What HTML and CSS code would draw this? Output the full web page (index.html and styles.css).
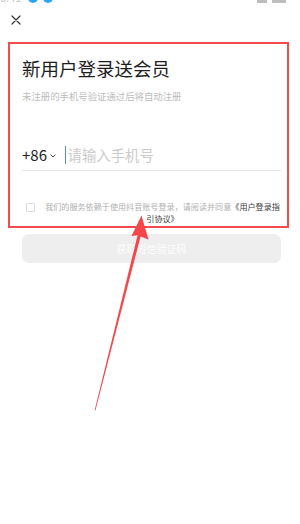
FILE: index.html
```html
<!DOCTYPE html>
<html lang="zh-CN">
<head>
<meta charset="utf-8">
<link rel="stylesheet" href="styles.css">
</head>
<body>
<div class="page">
  <div class="status">
    <span class="time">6:41</span>
    <span class="dot"></span>
    <span class="dot"></span>
    <span class="spacer"></span>
    <span class="sicon"></span>
    <span class="sicon wide"></span>
  </div>
  <div class="topbar">
    <svg class="close" width="10" height="10" viewBox="0 0 10 10"><path d="M1 1L9 9M9 1L1 9" stroke="#333" stroke-width="1.2" fill="none" stroke-linecap="round"/></svg>
  </div>
  <main class="content">
    <h1 class="title">新用户登录送会员</h1>
    <p class="subtitle">未注册的手机号验证通过后将自动注册</p>
    <div class="phone-row">
      <span class="code">+86</span>
      <svg class="chev" width="6" height="4" viewBox="0 0 6 4"><path d="M0.6 0.6L3 3L5.4 0.6" stroke="#333" stroke-width="0.9" fill="none"/></svg>
      <span class="cursor"></span>
      <span class="placeholder">请输入手机号</span>
    </div>
    <div class="agree">
      <span class="checkbox"></span>
      <p class="agree-text">我们的服务依赖于使用抖音账号登录，请阅读并同意<b>《用户登录指引协议》</b></p>
    </div>
    <div class="btn">获取短信验证码</div>
  </main>
  <div class="highlight"></div>
  <svg class="arrow" width="300" height="524" viewBox="0 0 300 524">
    <polygon points="141.5,215.5 131.5,236 137.6,235.2 94.6,410.5 95.4,410.6 140.6,236.4 148.5,239.5" fill="#f4474c"/>
  </svg>
</div>
</body>
</html>
```
FILE: styles.css
```css
html, body {
  margin: 0;
  padding: 0;
  background: #fff;
}
body {
  font-family: "Noto Sans CJK SC", "Noto Sans", sans-serif;
  color: #222;
}
.page {
  position: relative;
  width: 300px;
  height: 524px;
  overflow: hidden;
}
.status {
  height: 4px;
  overflow: hidden;
  display: flex;
  align-items: flex-start;
}
.time {
  margin-top: -9px;
  font-size: 11px;
  line-height: 12px;
  color: #c8c8c8;
  width: 28px;
}
.dot {
  width: 10px;
  height: 10px;
  margin-top: -7px;
  margin-right: 5px;
  border-radius: 50%;
  background: #27a7f3;
}
.spacer { flex: 1; }
.sicon {
  width: 10px;
  height: 3px;
  background: #bdbdbd;
  margin-right: 5px;
}
.sicon.wide {
  width: 14px;
  margin-right: 14px;
}
.topbar {
  padding: 11px 0 0 10.5px;
  height: 10px;
}
.close { display: block; }
.content {
  padding: 0 19px 0 22px;
}
.title {
  margin: 33px 0 0;
  font-size: 18.5px;
  line-height: 20px;
  font-weight: 400;
  color: #1e1e1e;
  letter-spacing: 0;
}
.subtitle {
  margin: 12px 0 0;
  font-size: 9.4px;
  line-height: 12px;
  color: #bcbcbc;
}
.phone-row {
  margin-top: 38px;
  height: 30px;
  display: flex;
  align-items: center;
  border-bottom: 1px solid #e6e6e6;
}
.code {
  font-size: 15px;
  line-height: 20px;
  color: #1e1e1e;
}
.chev {
  margin-left: 3px;
  margin-top: 1px;
}
.cursor {
  width: 1px;
  height: 18px;
  background: #5b86ef;
  margin-left: 9.5px;
}
.placeholder {
  margin-left: 1px;
  font-size: 14.4px;
  line-height: 20px;
  color: #cbcbcb;
}
.agree {
  margin-top: 30px;
  display: flex;
  align-items: flex-start;
}
.checkbox {
  flex: none;
  width: 9px;
  height: 9px;
  box-sizing: border-box;
  border: 1px solid #dcdcdc;
  border-radius: 1px;
  margin: 2px 0 0 4px;
}
.agree-text {
  margin: 0 0 0 9px;
  flex: 1;
  font-size: 8.1px;
  line-height: 12px;
  color: #b0b0b0;
  text-align: center;
}
.agree-text b {
  font-weight: 400;
  color: #3a3a3a;
}
.btn {
  margin-top: 9px;
  height: 29px;
  border-radius: 7px;
  background: #eeeeee;
  color: #fdfdfd;
  font-size: 10px;
  line-height: 29px;
  text-align: center;
}
.highlight {
  position: absolute;
  left: 8px;
  top: 42px;
  width: 281px;
  height: 186px;
  box-sizing: border-box;
  border: 2px solid #f44b4e;
}
.arrow {
  position: absolute;
  left: 0;
  top: 0;
}
```
